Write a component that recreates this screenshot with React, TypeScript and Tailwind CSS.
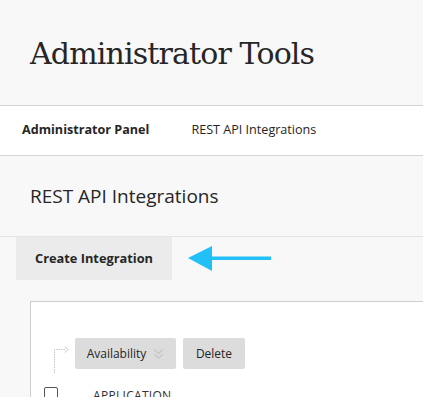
export default function App() {
  return (
    <div className="h-[397px] w-[423px] overflow-hidden bg-[#f8f8f8] font-['Open_Sans',sans-serif] text-[#262626]">
      {/* Page header */}
      <header className="flex h-[106px] items-center border-b border-[#d4d4d4] pl-[30px]">
        <h1 className="mt-[2px] font-['DejaVu_Serif',serif] text-[30px] leading-none tracking-[-0.85px] text-[#262626]">
          Administrator Tools
        </h1>
      </header>

      {/* Breadcrumb nav */}
      <nav className="flex h-[50px] items-center border-b border-[#d4d4d4] bg-white pl-[22px] text-[12.6px]">
        <span className="font-bold">Administrator Panel</span>
        <span className="ml-[42px]">REST API Integrations</span>
      </nav>

      {/* Section title */}
      <div className="flex h-[81px] items-center border-b border-[#e4e4e4] pl-[30px]">
        <h2 className="text-[19px] leading-none">REST API Integrations</h2>
      </div>

      {/* Toolbar */}
      <div className="flex items-center">
        <button className="ml-[16px] h-[43px] w-[156px] bg-[#ebebeb] text-[12.8px] font-bold">
          Create Integration
        </button>
        <svg width="86" height="28" viewBox="0 0 86 28" className="ml-[15px]">
          <polygon points="1,13 25,1 25,26" fill="#22c0f6" />
          <rect x="22" y="11.5" width="62" height="3.5" fill="#22c0f6" />
        </svg>
      </div>

      {/* Table panel */}
      <div className="ml-[30px] mt-[21px] h-[200px] border border-r-0 border-[#cdcdcd] bg-white pt-[36px]">
        <div className="flex h-[31px] items-start">
          <svg width="20" height="26" viewBox="0 0 20 26" className="ml-[21px] mt-[9px] shrink-0 overflow-visible">
            <path d="M2.5 26 V2.5 H13" stroke="#c4c4c4" strokeWidth="1" strokeDasharray="1.5 1" fill="none" />
            <path d="M13 -0.5 L16 2.5 L13 5.5" stroke="#c4c4c4" strokeWidth="1" fill="none" />
          </svg>
          <button className="ml-[3px] flex h-[31px] w-[101px] items-center justify-center gap-[7px] rounded-[2px] bg-[#dcdcdc] text-[12px] text-[#262626]">
            Availability
            <svg width="11" height="12" viewBox="0 0 11 12">
              <path d="M1 1.5 L5.5 5.5 L10 1.5 M1 6 L5.5 10 L10 6" stroke="#c8c8c8" strokeWidth="1.4" fill="none" />
            </svg>
          </button>
          <button className="ml-[7px] h-[31px] w-[62px] rounded-[2px] bg-[#dcdcdc] text-[12px] text-[#262626]">
            Delete
          </button>
        </div>
        <div className="mt-[18px] flex items-start">
          <div className="ml-[13px] h-[14px] w-[14px] shrink-0 rounded-[2px] border border-[#555] bg-white" />
          <span className="ml-[35px] mt-[1px] text-[12px] leading-[16px] tracking-[0.3px] text-[#333]">APPLICATION</span>
        </div>
      </div>
    </div>
  );
}
